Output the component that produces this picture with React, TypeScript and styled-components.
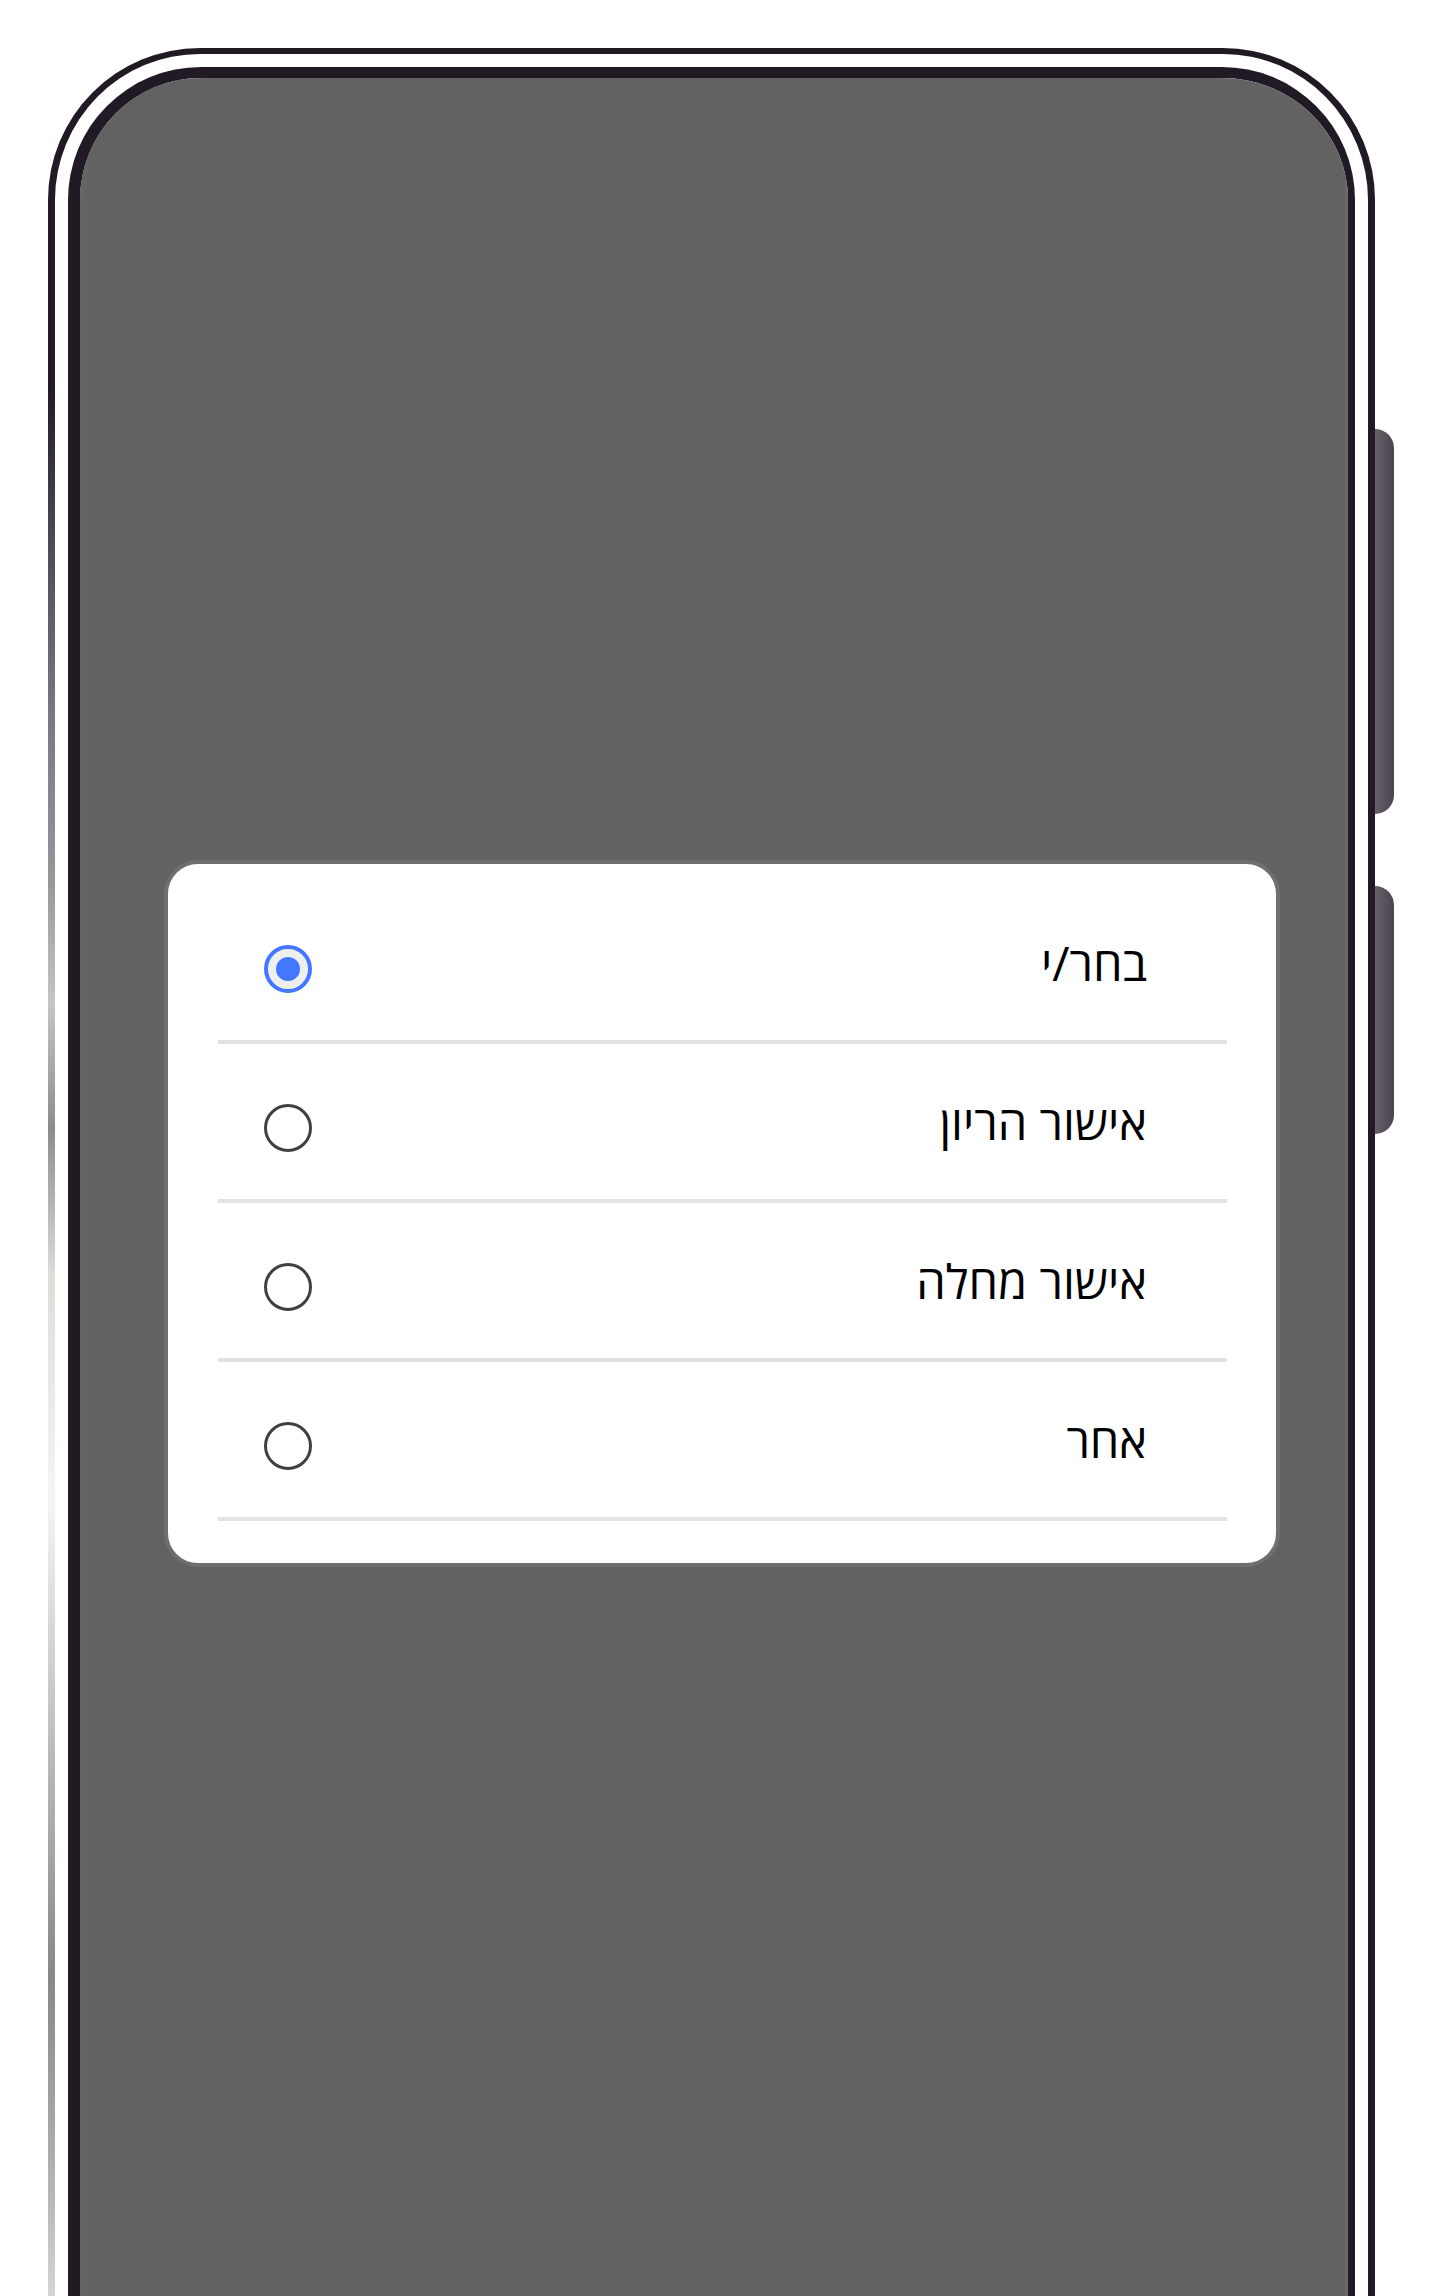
import React from "react";
import styled, { createGlobalStyle } from "styled-components";

const GlobalStyle = createGlobalStyle`
  html, body {
    margin: 0;
    padding: 0;
    background: #ffffff;
    overflow: hidden;
  }
  #root {
    width: 1440px;
    height: 2296px;
  }
`;

const Page = styled.div`
  width: 1440px;
  height: 2296px;
  box-sizing: border-box;
  padding: 48px 0 0 48px;
  overflow: hidden;
  background: #ffffff;
  display: flex;
  align-items: flex-start;
`;

const Phone = styled.div`
  display: flex;
  align-items: flex-start;
`;

const Shell = styled.div`
  position: relative;
  box-sizing: border-box;
  width: 1327px;
  height: 2440px;
  border: 7px solid #211a25;
  border-top-width: 6px;
  border-radius: 152px;
  padding: 13px 13px 0 13px;
  background: #ffffff;
  display: flex;
`;

const EdgeSheen = styled.div`
  position: absolute;
  left: -7px;
  top: 150px;
  width: 7px;
  bottom: 0;
  background: linear-gradient(
    to bottom,
    #211a25 0px,
    #211a25 180px,
    #4a4450 320px,
    #7a7480 500px,
    #9a969c 680px,
    #c8c4c4 800px,
    #8e8a90 924px,
    #e0dcd8 1072px,
    #f5f5f5 1296px,
    #bcbcbc 1544px,
    #8a868c 1775px,
    #b0acb0 1957px,
    #d8d4d0 2096px
  );
`;

const Bezel = styled.div`
  flex: 1;
  box-sizing: border-box;
  border: 0 solid #211a25;
  border-width: 11px 7px 0 12px;
  border-radius: 133px 133px 0 0;
  display: flex;
  overflow: hidden;
`;

const Screen = styled.div`
  flex: 1;
  background: #626262;
  border-radius: 121px 121px 0 0 / 100px 100px 0 0;
  box-shadow: inset -3px 0 0 #686868, inset 7px 0 0 #646464;
  display: flex;
  flex-direction: column;
`;

const StatusBar = styled.div`
  height: 97px;
  flex: none;
  display: flex;
  justify-content: space-between;
  align-items: flex-end;
  padding: 0 8px 0 7px;
`;

const StatusRule = styled.div<{ $w: number }>`
  width: ${(p) => p.$w}px;
  height: 1px;
  background: #5c5c5c;
`;

const Body = styled.div`
  padding: 685px 0 0 84px;
`;

const Dialog = styled.div`
  box-sizing: border-box;
  width: 1116px;
  background: #ffffff;
  border: 4px solid #6f6f6f;
  border-radius: 34px;
  padding: 21px 49px 42px 50px;
  display: flex;
  flex-direction: column;
`;

const Option = styled.label`
  box-sizing: border-box;
  height: 159px;
  border-bottom: 4px solid #e2e2e2;
  padding: 12px 80px 0 46px;
  display: flex;
  flex-direction: row;
  align-items: center;
  justify-content: space-between;
  direction: rtl;
  cursor: pointer;
`;

const Label = styled.span`
  font-family: "Open Sans", "DejaVu Sans", "Liberation Sans", sans-serif;
  font-size: 47px;
  line-height: 1;
  color: #000000;
  font-weight: 400;
  margin-bottom: 10px;
`;

const Radio = styled.span<{ $on: boolean }>`
  box-sizing: border-box;
  width: 48px;
  height: 48px;
  border-radius: 50%;
  border: ${(p) => (p.$on ? "4px solid #4377ff" : "3px solid #404040")};
  background: ${(p) => (p.$on ? "#efefef" : "#ffffff")};
  display: grid;
  place-items: center;
`;

const Dot = styled.span`
  width: 24px;
  height: 24px;
  border-radius: 50%;
  background: #4377ff;
`;

const ButtonRail = styled.div`
  display: flex;
  flex-direction: column;
  gap: 72px;
  padding-top: 381px;
`;

const SideButton = styled.div<{ $h: number }>`
  width: 19px;
  height: ${(p) => p.$h}px;
  border-radius: 0 20px 20px 0;
  background: linear-gradient(to right, #68616b, #4b444e);
`;

const options = ["בחר/י", "אישור הריון", "אישור מחלה", "אחר"];

export default function App() {
  const [selected, setSelected] = React.useState(0);
  return (
    <>
      <GlobalStyle />
      <Page>
        <Phone>
          <Shell>
            <EdgeSheen />
            <Bezel>
              <Screen>
                <StatusBar>
                  <StatusRule $w={36} />
                  <StatusRule $w={395} />
                </StatusBar>
                <Body>
                  <Dialog role="radiogroup">
                    {options.map((o, i) => (
                      <Option key={o} onClick={() => setSelected(i)}>
                        <Label>{o}</Label>
                        <Radio $on={selected === i} role="radio" aria-checked={selected === i}>
                          {selected === i && <Dot />}
                        </Radio>
                      </Option>
                    ))}
                  </Dialog>
                </Body>
              </Screen>
            </Bezel>
          </Shell>
          <ButtonRail>
            <SideButton $h={385} />
            <SideButton $h={248} />
          </ButtonRail>
        </Phone>
      </Page>
    </>
  );
}
